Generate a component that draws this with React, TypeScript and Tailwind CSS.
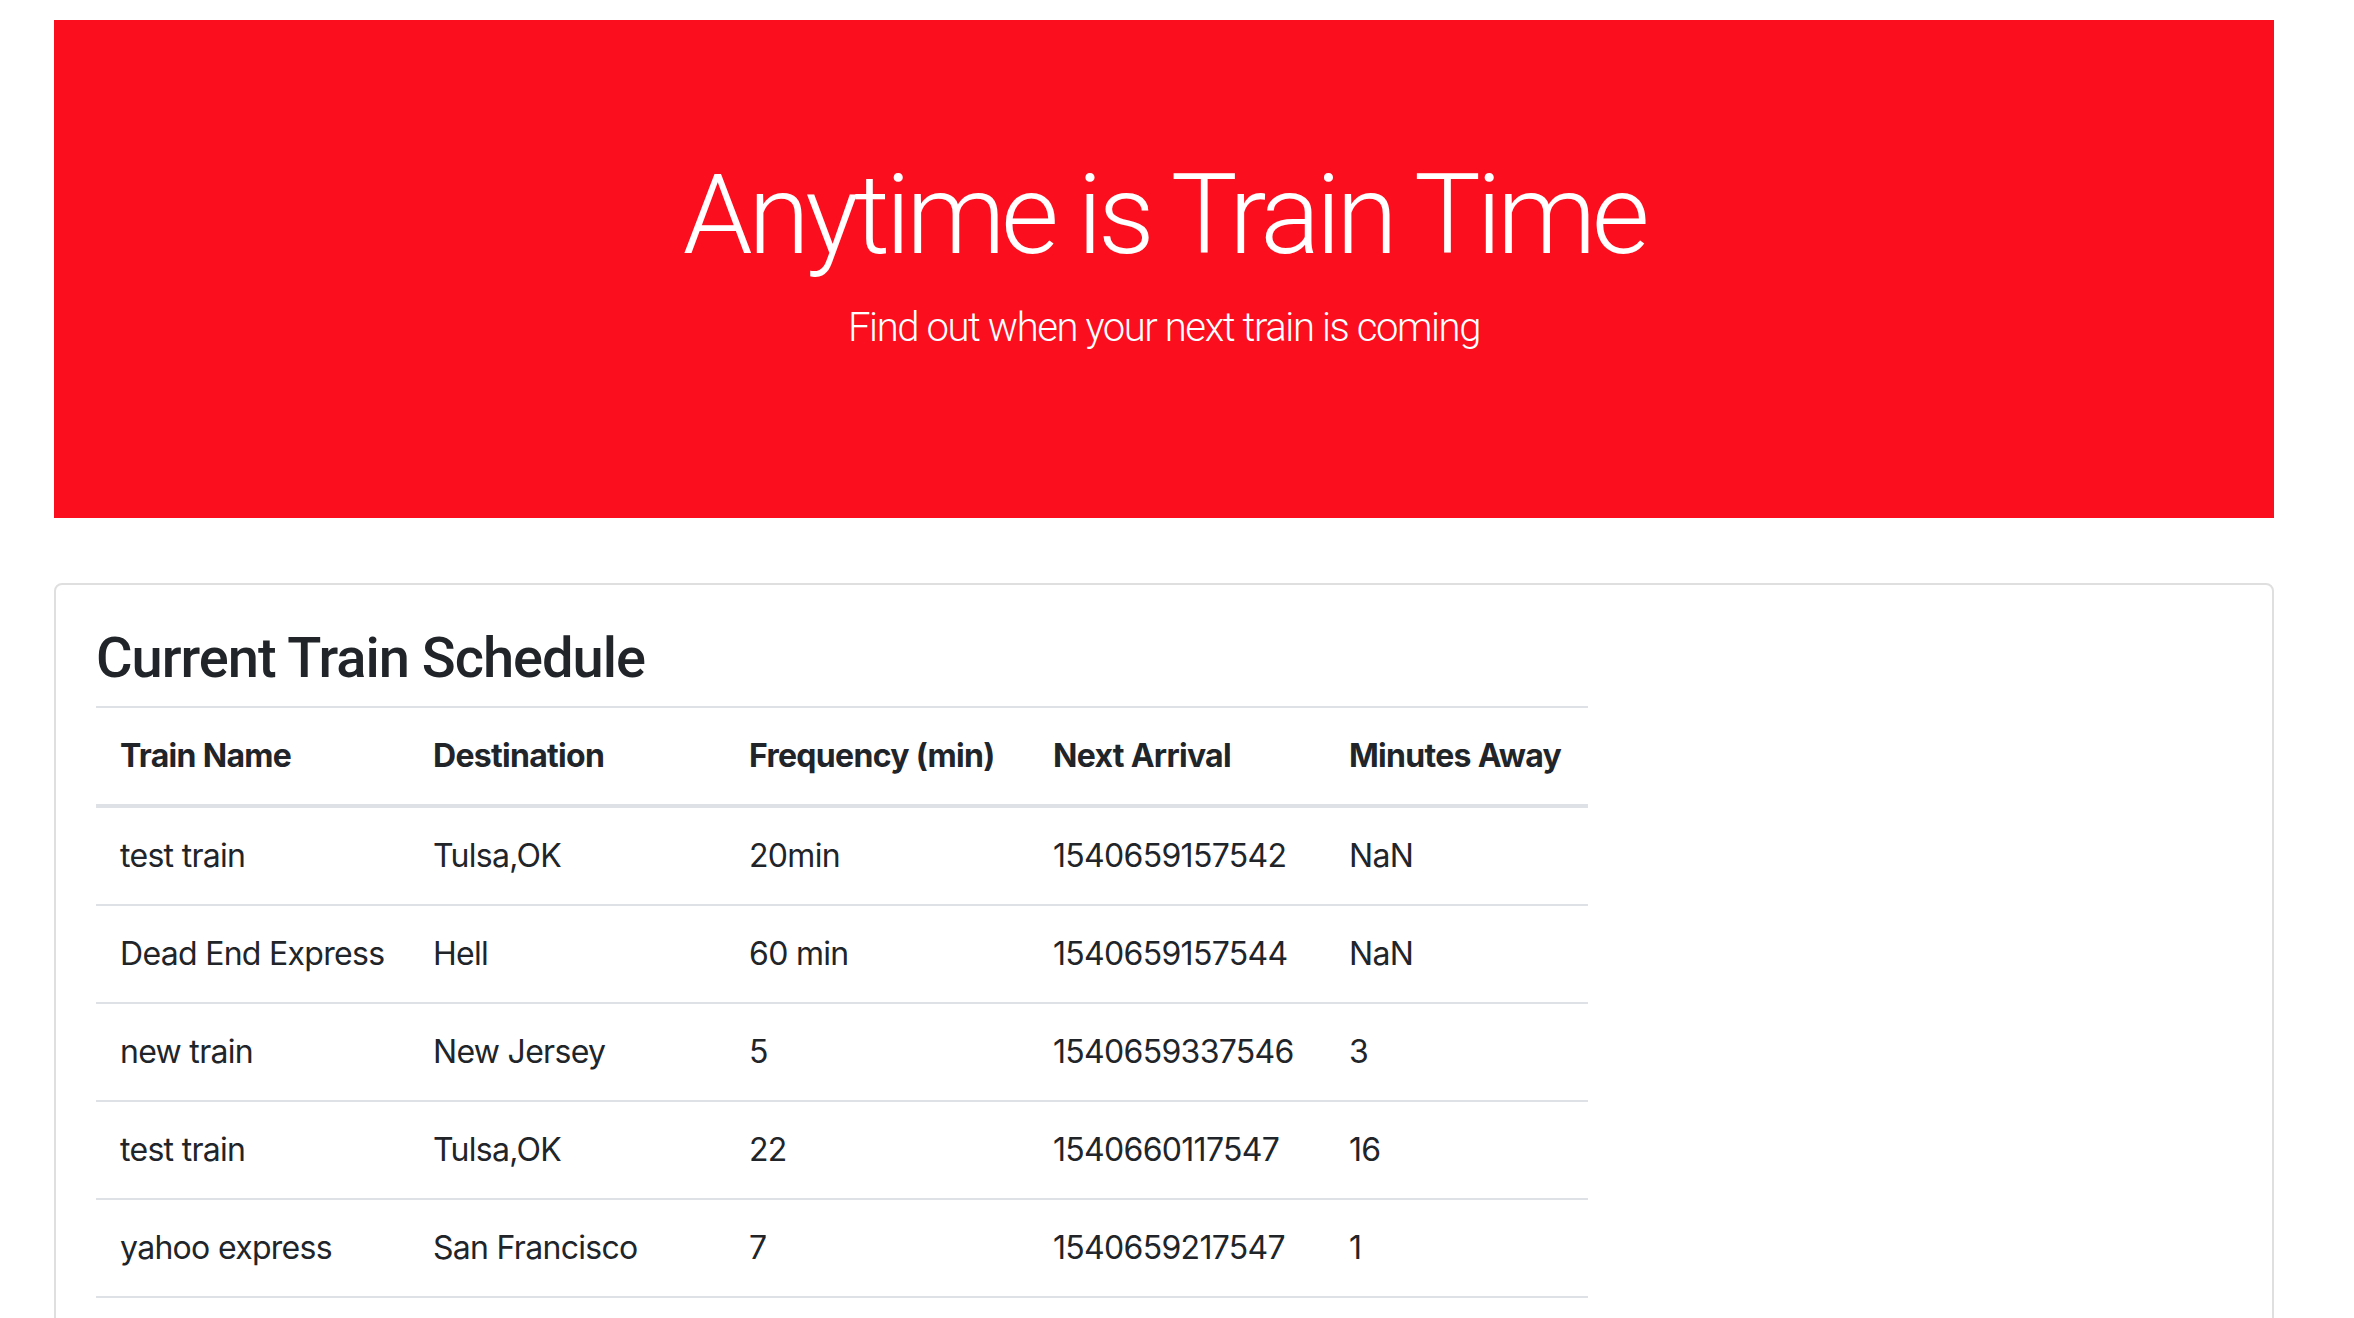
import React from 'react';

type Train = {
    name: string;
    destination: string;
    frequency: string;
    nextArrival: string;
    minutesAway: string;
};

const trains: Train[] = [
    { name: 'test train', destination: 'Tulsa,OK', frequency: '20min', nextArrival: '1540659157542', minutesAway: 'NaN' },
    { name: 'Dead End Express', destination: 'Hell', frequency: '60 min', nextArrival: '1540659157544', minutesAway: 'NaN' },
    { name: 'new train', destination: 'New Jersey', frequency: '5', nextArrival: '1540659337546', minutesAway: '3' },
    { name: 'test train', destination: 'Tulsa,OK', frequency: '22', nextArrival: '1540660117547', minutesAway: '16' },
    { name: 'yahoo express', destination: 'San Francisco', frequency: '7', nextArrival: '1540659217547', minutesAway: '1' },
];

const App = () => {
    return (
        <div className="min-h-screen bg-white font-['Inter','Liberation_Sans',sans-serif] text-[#212529]">
            <div className="ml-[54px] w-[2220px] pt-[20px]">
                {/* Jumbotron */}
                <div className="bg-[#fb0f1f] px-[64px] py-[128px] text-center text-white mb-[65px]">
                    <h1 className="font-['Roboto','Inter',sans-serif] text-[112px] leading-[1.2] font-light mb-[16px] tracking-[-4.5px]">Anytime is Train Time</h1>
                    <p className="font-['Roboto','Inter',sans-serif] text-[40px] leading-[1.5] font-light mb-[32px] tracking-[-1.4px]">Find out when your next train is coming</p>
                </div>

                {/* Schedule card */}
                <div className="border-2 border-[#dfdfdf] rounded-[8px] p-[40px] pb-[80px]">
                    <h3 className="font-['Roboto','Inter',sans-serif] text-[56px] leading-[1.2] font-medium mb-[13px] tracking-[-1px]">Current Train Schedule</h3>
                    <table className="w-[1492px] text-[32px] leading-[48px] border-collapse table-fixed tracking-[-0.7px]">
                        <thead>
                            <tr className="border-t-2 border-b-4 border-[#dee2e6]">
                                <th className="w-[313px] p-[24px] text-left font-bold">Train Name</th>
                                <th className="w-[316px] p-[24px] text-left font-bold">Destination</th>
                                <th className="w-[304px] p-[24px] text-left font-bold whitespace-nowrap">Frequency (min)</th>
                                <th className="w-[296px] p-[24px] text-left font-bold">Next Arrival</th>
                                <th className="w-[263px] p-[24px] text-left font-bold whitespace-nowrap">Minutes Away</th>
                            </tr>
                        </thead>
                        <tbody>
                            {trains.map((train, i) => (
                                <tr key={i} className="border-b-2 border-[#dee2e6]">
                                    <td className="p-[24px] whitespace-nowrap">{train.name}</td>
                                    <td className="p-[24px] whitespace-nowrap">{train.destination}</td>
                                    <td className="p-[24px]">{train.frequency}</td>
                                    <td className="p-[24px]">{train.nextArrival}</td>
                                    <td className="p-[24px]">{train.minutesAway}</td>
                                </tr>
                            ))}
                        </tbody>
                    </table>
                </div>
            </div>
        </div>
    );
};

export default App;
